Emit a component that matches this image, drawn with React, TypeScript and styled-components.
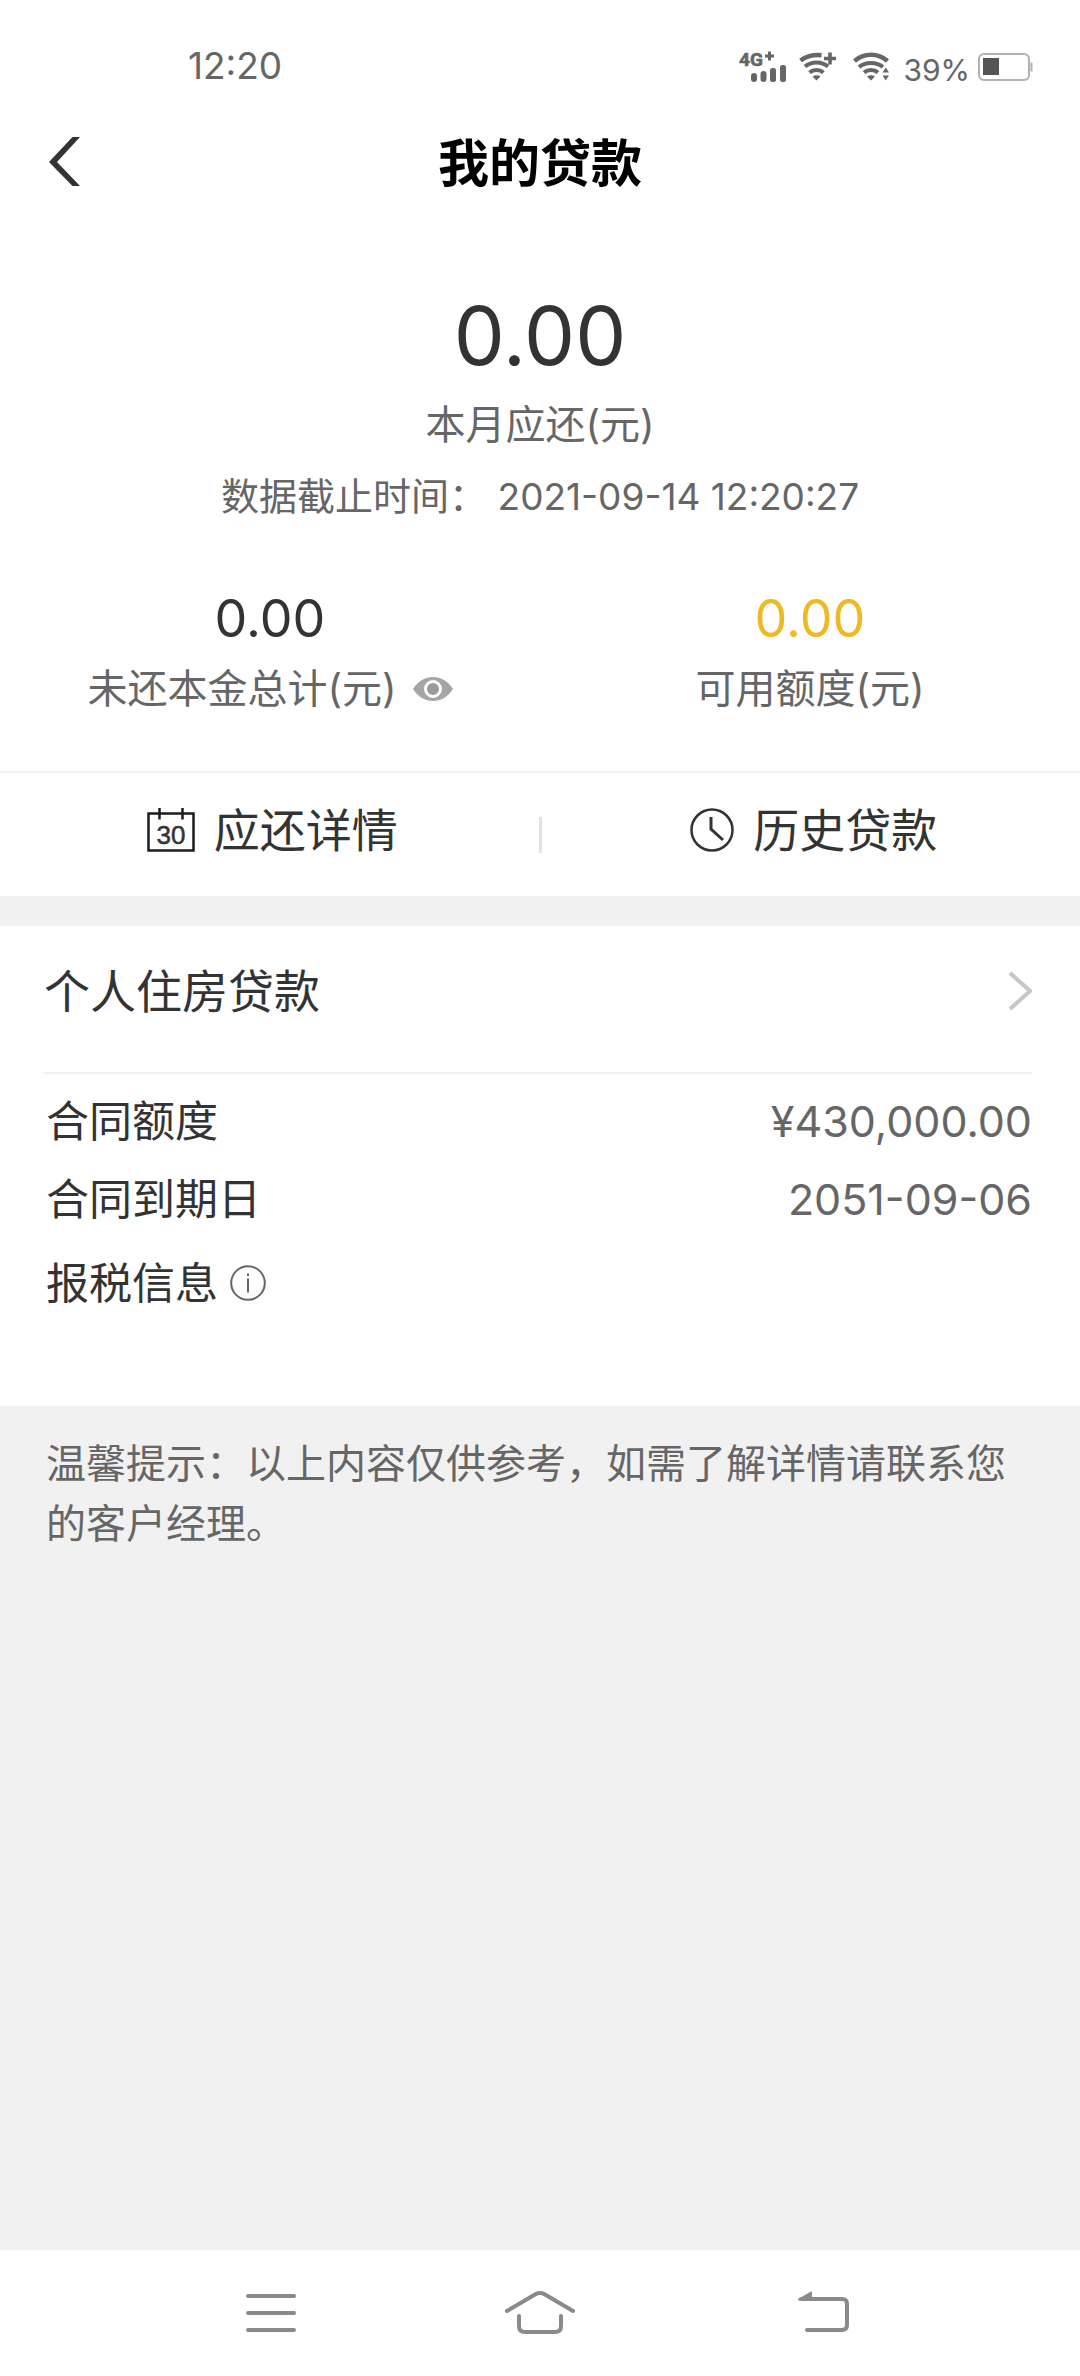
import React from "react";
import styled, { createGlobalStyle } from "styled-components";

const ink = "#333333";
const muted = "#666666";
const line = "#f1f1f1";
const accent = "#efb925";

const GlobalStyle = createGlobalStyle`
  * { box-sizing: border-box; }
  body {
    margin: 0;
    background: #ffffff;
    color: ${ink};
    font-family: Inter, "Noto Sans CJK SC", sans-serif;
  }
  h1, h2, p, dl, dt, dd { margin: 0; font-weight: 400; }
  button {
    margin: 0;
    padding: 0;
    border: 0;
    background: none;
    color: inherit;
    font: inherit;
    cursor: pointer;
  }
  svg { display: block; flex: none; }
`;

const Screen = styled.div`
  display: flex;
  flex-direction: column;
  min-height: 100vh;
`;

const Content = styled.main`
  display: flex;
  flex: 1;
  flex-direction: column;
`;

const StatusBar = styled.div`
  display: flex;
  justify-content: space-between;
  align-items: center;
  height: 116px;
  padding: 16px 46px 0 188px;
  color: ${muted};
`;

const Clock = styled.time`
  font-size: 37px;
  line-height: 44px;
`;

const Indicators = styled.div`
  display: flex;
  align-items: center;
  padding-top: 2px;
`;

const Signal = styled.span<{ $gap: number }>`
  margin-right: ${(p) => p.$gap}px;
`;

const Percent = styled.span`
  margin-right: 8px;
  padding-top: 6px;
  font-size: 30px;
  line-height: 36px;
`;

const Header = styled.header`
  display: grid;
  grid-template-columns: 1fr auto 1fr;
  align-items: center;
  height: 96px;
  padding: 0 48px;
`;

const BackButton = styled.button`
  justify-self: start;
  && {
    padding-bottom: 4px;
  }
`;

const Title = styled.h1`
  && {
    color: #000000;
    font-size: 51px;
    font-weight: 700;
    line-height: 60px;
  }
`;

const Summary = styled.section`
  display: flex;
  flex-direction: column;
  align-items: center;
  gap: 11px;
  padding-top: 76px;
`;

const Amount = styled.p<{ $large?: boolean; $accent?: boolean }>`
  color: ${(p) => (p.$accent ? accent : ink)};
  font-size: ${(p) => (p.$large ? 81 : 52)}px;
  line-height: ${(p) => (p.$large ? 96 : 60)}px;
`;

const Label = styled.p`
  display: flex;
  align-items: center;
  gap: 16px;
  color: ${muted};
  font-size: 40px;
  line-height: 60px;
`;

const Deadline = styled.p`
  color: ${muted};
  font-size: 38px;
  line-height: 60px;
`;

const Stamp = styled.time`
  font-size: 37px;
`;

const Stats = styled.section`
  display: grid;
  grid-template-columns: 1fr 1fr;
  padding: 62px 0 52px;
`;

const Stat = styled.div`
  display: flex;
  flex-direction: column;
  align-items: center;
  gap: 10px;
`;

const Actions = styled.nav`
  display: grid;
  grid-template-columns: 1fr 3px 1fr;
  align-items: center;
  padding: 27px 0 36px;
  border-top: 2px solid ${line};
`;

const Action = styled.button`
  display: flex;
  justify-content: center;
  align-items: center;
  gap: 19px;
  && {
    padding-left: 6px;
    font-size: 46px;
    line-height: 60px;
  }
`;

const Separator = styled.span`
  height: 36px;
  margin-top: 10px;
  background: #e2e2e2;
`;

const Band = styled.div`
  height: 30px;
  background: ${line};
`;

const Loan = styled.section`
  padding: 0 48px 78px 44px;
`;

const LoanHeader = styled.button`
  display: flex;
  justify-content: space-between;
  align-items: center;
  width: 100%;
  && {
    padding: 35px 0 51px;
    border-bottom: 2px solid ${line};
  }
`;

const LoanName = styled.span`
  font-size: 46px;
  line-height: 60px;
`;

const Details = styled.dl`
  padding: 8px 0 0 2px;
`;

const Detail = styled.div<{ $tall?: boolean }>`
  display: flex;
  justify-content: space-between;
  align-items: center;
  height: ${(p) => (p.$tall ? 90 : 78)}px;
`;

const Term = styled.dt`
  display: flex;
  align-items: center;
  gap: 12px;
  font-size: 43px;
  line-height: 60px;
`;

const Value = styled.dd`
  color: ${muted};
  font-size: 43px;
  line-height: 60px;
`;

const Notice = styled.section`
  flex: 1;
  padding: 28px 46px;
  background: ${line};
  color: ${muted};
  font-size: 40px;
  line-height: 60px;
`;

const SystemNav = styled.nav`
  display: grid;
  grid-template-columns: repeat(3, 1fr);
  justify-items: center;
  align-items: center;
  height: 126px;
  padding: 0 136px;
`;

const MobileIcon = () => (
  <svg width="48" height="44" viewBox="0 -6 48 44" fill={muted} aria-label="4G+">
    <text x="0" y="15" fontFamily="Roboto, sans-serif" fontSize="19" fontWeight="700" stroke={muted} strokeWidth="0.600">4G</text>
    <path d="M26 5h9M30.500 .500v9" stroke={muted} strokeWidth="3" />
    <rect x="12" y="22" width="6" height="9" rx="3" />
    <rect x="21.500" y="20" width="6" height="11" rx="3" />
    <rect x="31" y="17" width="6" height="14" rx="2.500" />
    <rect x="41" y="14" width="6" height="17" rx="2.500" />
  </svg>
);

const WifiPlusIcon = () => (
  <svg width="38" height="30" viewBox="0 0 38 30" fill="none" stroke={muted}>
    <path d="M1.500 8.500C7 4.500 14 2.500 22.500 3.200" strokeWidth="4.500" />
    <path d="M6 14.500C12.500 9 22.500 9 29 14.500" strokeWidth="4" />
    <path d="M10.500 20.500C14.500 17 20.500 17 24.500 20.500" strokeWidth="4" />
    <path d="M13.500 24.500Q17.500 22 21.500 24.500L17.500 28.500Z" fill={muted} stroke="none" />
    <path d="M25 6.500h12M31 .500v12" strokeWidth="3.600" />
  </svg>
);

const WifiDataIcon = () => (
  <svg width="38" height="30" viewBox="0 0 38 30" fill="none" stroke={muted}>
    <path d="M1.500 9C11 .800 25 .800 34.500 9" strokeWidth="4.500" />
    <path d="M6 15C12.500 9.500 23.500 9.500 30 15" strokeWidth="4" />
    <path d="M11 20.500C15 17 21 17 25 20.500" strokeWidth="4" />
    <path d="M14 24.500Q18 22 22 24.500L18 28.500Z" fill={muted} stroke="none" />
    <path d="M29.500 20.500h6.500l-3.250-5zM29.500 23.500h6.500l-3.250 5z" fill={muted} stroke="none" />
  </svg>
);

const BatteryIcon = () => (
  <svg width="56" height="28" viewBox="0 0 56 28" fill="none">
    <rect x="1" y="1" width="50" height="26" rx="5" stroke="#b0b0b0" strokeWidth="2" />
    <rect x="5" y="5" width="16" height="17" fill="#555555" />
    <path d="M53.500 9.500v9" stroke="#b0b0b0" strokeWidth="2" />
  </svg>
);

const BackIcon = () => (
  <svg width="34" height="50" viewBox="0 0 34 50" fill={ink}>
    <path d="M24.500 0H32L9 25L32 49H24.500L1 25Z" />
  </svg>
);

const EyeIcon = () => (
  <svg width="40" height="26" viewBox="0 0 40 26">
    <path d="M0 13C5 5 12 1 20 1S35 5 40 13C35 21 28 25 20 25S5 21 0 13Z" fill="#a6a6a6" />
    <circle cx="20" cy="13" r="7.500" fill="#9a9a9a" stroke="#ffffff" strokeWidth="3" />
  </svg>
);

const CalendarIcon = () => (
  <svg width="48" height="44" viewBox="0 0 48 44" fill="none" stroke="#1c1c1c">
    <path d="M1.500 5.500h45v37h-45zM12.500 0v11.500M35.500 0v11.500" strokeWidth="2.500" />
    <text x="24" y="35.500" textAnchor="middle" fontFamily="Liberation Sans, sans-serif" fontSize="26" fill="#333333" stroke="#333333" strokeWidth="0.500">30</text>
  </svg>
);

const HistoryIcon = () => (
  <svg width="44" height="44" viewBox="0 0 44 44" fill="none" stroke={ink} strokeWidth="2.500">
    <circle cx="22" cy="22" r="20.500" />
    <path d="M21 9v12l12 11" strokeWidth="3" />
  </svg>
);

const ChevronIcon = () => (
  <svg width="24" height="40" viewBox="0 0 24 40" fill="none">
    <path d="M2 2L22 20L2 38" stroke="#c6c6c6" strokeWidth="4" />
  </svg>
);

const InfoIcon = () => (
  <svg width="36" height="36" viewBox="0 0 36 36" fill="none" stroke={muted}>
    <circle cx="18" cy="18" r="16.800" strokeWidth="2" />
    <path d="M18 13.500v14M18 8.500v2.500" strokeWidth="2" />
  </svg>
);

const MenuIcon = () => (
  <svg width="50" height="44" viewBox="0 0 50 44" stroke="#8a8a8a" strokeWidth="4" strokeLinecap="round">
    <path d="M2 5h46M2 22h46M2 39h46" />
  </svg>
);

const HomeIcon = () => (
  <svg width="70" height="44" viewBox="0 0 70 44" fill="none" stroke="#8a8a8a" strokeWidth="4" strokeLinecap="round">
    <path d="M2 20L30 3.500Q35 .500 40 3.500L68 20" />
    <path d="M14 25v10q0 6 6 6h30q6 0 6-6v-10" />
  </svg>
);

const ReturnIcon = () => (
  <svg width="80" height="44" viewBox="0 0 80 44" fill="none" stroke="#8a8a8a" strokeWidth="4" strokeLinecap="round">
    <path d="M32 8h41q5 0 5 5v21q0 5-5 5H38" />
    <path d="M30 8.500L42 1.500V8.500Z" fill="#8a8a8a" strokeWidth="2" strokeLinejoin="round" />
  </svg>
);

export default function App() {
  return (
    <Screen>
      <GlobalStyle />
      <StatusBar>
        <Clock>12:20</Clock>
        <Indicators>
          <Signal $gap={12}><MobileIcon /></Signal>
          <Signal $gap={16}><WifiPlusIcon /></Signal>
          <Signal $gap={12}><WifiDataIcon /></Signal>
          <Percent>39%</Percent>
          <BatteryIcon />
        </Indicators>
      </StatusBar>

      <Header>
        <BackButton type="button" aria-label="返回"><BackIcon /></BackButton>
        <Title>我的贷款</Title>
      </Header>

      <Content>
        <Summary>
          <Amount $large>0.00</Amount>
          <Label>本月应还(元)</Label>
          <Deadline>数据截止时间： <Stamp>2021-09-14 12:20:27</Stamp></Deadline>
        </Summary>

        <Stats>
          <Stat>
            <Amount>0.00</Amount>
            <Label>
              未还本金总计(元)
              <button type="button" aria-label="显示或隐藏金额"><EyeIcon /></button>
            </Label>
          </Stat>
          <Stat>
            <Amount $accent>0.00</Amount>
            <Label>可用额度(元)</Label>
          </Stat>
        </Stats>

        <Actions>
          <Action type="button"><CalendarIcon />应还详情</Action>
          <Separator />
          <Action type="button"><HistoryIcon />历史贷款</Action>
        </Actions>

        <Band />

        <Loan>
          <LoanHeader type="button">
            <LoanName>个人住房贷款</LoanName>
            <ChevronIcon />
          </LoanHeader>
          <Details>
            <Detail>
              <Term>合同额度</Term>
              <Value>¥430,000.00</Value>
            </Detail>
            <Detail>
              <Term>合同到期日</Term>
              <Value>2051-09-06</Value>
            </Detail>
            <Detail $tall>
              <Term>
                报税信息
                <button type="button" aria-label="报税信息说明"><InfoIcon /></button>
              </Term>
            </Detail>
          </Details>
        </Loan>

        <Notice>
          <p>温馨提示：以上内容仅供参考，如需了解详情请联系您的客户经理。</p>
        </Notice>
      </Content>

      <SystemNav>
        <button type="button" aria-label="最近任务"><MenuIcon /></button>
        <button type="button" aria-label="主屏幕"><HomeIcon /></button>
        <button type="button" aria-label="后退"><ReturnIcon /></button>
      </SystemNav>
    </Screen>
  );
}
